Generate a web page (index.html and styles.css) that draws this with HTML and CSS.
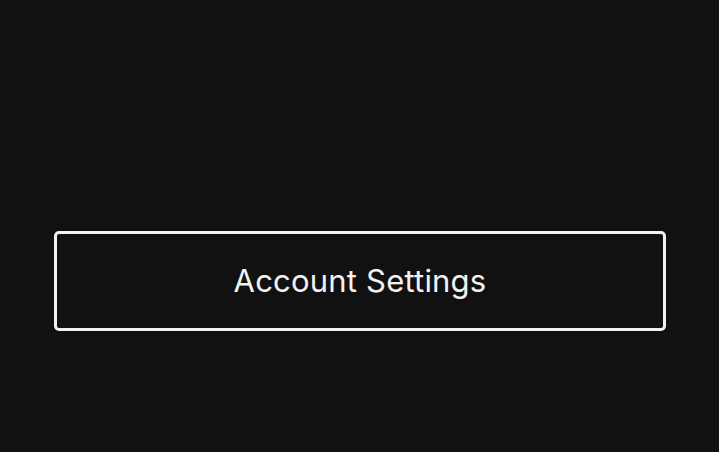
FILE: index.html
```html
<!DOCTYPE html>
<html>
<head>
<meta charset="utf-8">
<link rel="stylesheet" href="styles.css">
</head>
<body>
<main class="page">
  <button class="settings-btn">Account Settings</button>
</main>
</body>
</html>
```

FILE: styles.css
```css
html, body {
  margin: 0;
  padding: 0;
  background: #111111;
  width: 719px;
  height: 452px;
  overflow: hidden;
}
.page {
  padding: 231px 53px 0 54px;
  display: flex;
  flex-direction: column;
}
.settings-btn {
  box-sizing: border-box;
  width: 612px;
  height: 100px;
  background: #111111;
  border: 3px solid #f2f2f2;
  border-radius: 5px;
  color: #f2f2f2;
  font-family: "Inter", sans-serif;
  font-size: 31px;
  letter-spacing: 0.2px;
  font-weight: 400;
  display: flex;
  align-items: center;
  justify-content: center;
  padding: 0 0 1px 0;
}
```
